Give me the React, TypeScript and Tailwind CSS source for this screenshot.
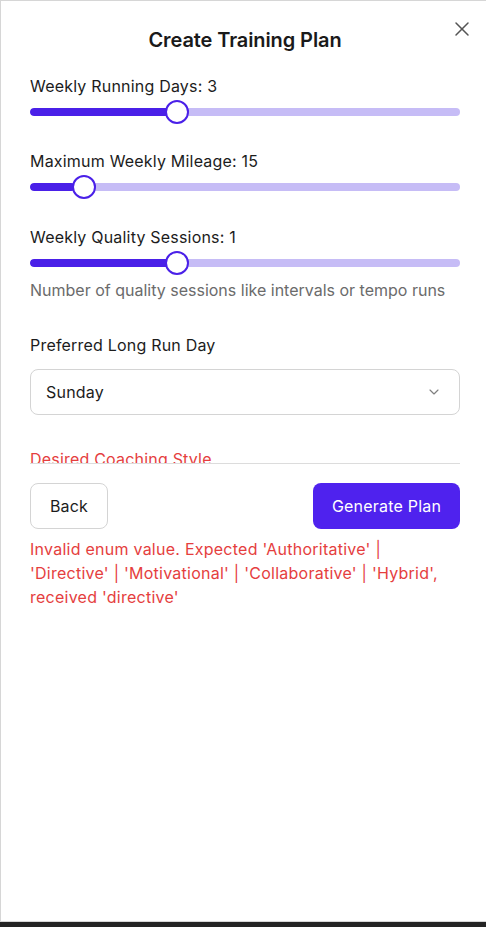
import React from "react";

function Slider({ pct }: { pct: number }) {
  return (
    <div className="relative h-[24px] flex items-center">
      <div className="w-full h-[8px] rounded-full bg-[#c6bcf6] overflow-hidden">
        <div className="h-full bg-[#4a20e8] rounded-full" style={{ width: `${pct}%` }} />
      </div>
      <div
        className="absolute top-0 w-[24px] h-[24px] rounded-full bg-white border-[2.5px] border-[#4a20e8]"
        style={{ left: `calc(${pct / 100} * (100% - 24px))` }}
      />
    </div>
  );
}

export default function App() {
  return (
    <div className="w-[486px] h-[927px] flex flex-col bg-white" style={{ fontFamily: "Inter, 'Noto Sans', sans-serif" }}>
      <div className="relative flex-1 flex flex-col border-l border-t border-b border-[#d6d6d6] pl-[29px] pr-[26px] pt-[25px] text-[16px] leading-[24px] tracking-[0.2px] text-[#1c1c1c]">
        <button className="absolute left-[449px] top-[16px] w-[24px] h-[24px] flex items-center justify-center text-[#555]">
          <svg width="24" height="24" viewBox="0 0 24 24" fill="none" stroke="currentColor" strokeWidth="1.5" strokeLinecap="round">
            <path d="M18 6 6 18" />
            <path d="m6 6 12 12" />
          </svg>
        </button>
        <h2 className="text-center text-[20px] leading-[28px] font-semibold tracking-[-0.1px] text-[#1a1a1a]">Create Training Plan</h2>
        <div className="h-[409px] shrink-0 overflow-hidden pt-[20px]">
          <div className="flex flex-col gap-[2px]">
            <div>Weekly Running Days: 3</div>
            <Slider pct={33.33} />
          </div>
          <div className="flex flex-col gap-[2px] mt-[25px]">
            <div>Maximum Weekly Mileage: 15</div>
            <Slider pct={10.4} />
          </div>
          <div className="flex flex-col gap-[2px] mt-[26px]">
            <div>Weekly Quality Sessions: 1</div>
            <Slider pct={33.33} />
          </div>
          <div className="mt-[3px] text-[#6b6b6b] tracking-normal">Number of quality sessions like intervals or tempo runs</div>
          <div className="mt-[31px]">Preferred Long Run Day</div>
          <div className="mt-[12px] h-[46px] rounded-[8px] border border-[#d4d4d4] flex items-center justify-between pl-[15px] pr-[17px]">
            <span>Sunday</span>
            <svg width="16" height="16" viewBox="0 0 24 24" fill="none" stroke="#808080" strokeWidth="1.75" strokeLinecap="round" strokeLinejoin="round">
              <path d="m6 9 6 6 6-6" />
            </svg>
          </div>
          <div className="mt-[32px] text-[#e53e3e]">Desired Coaching Style</div>
        </div>
        <div className="border-t border-[#dcdcdc] pt-[19px]">
          <div className="flex justify-between">
            <button className="h-[46px] w-[78px] rounded-[8px] border border-[#d4d4d4] bg-white text-[#1c1c1c]">Back</button>
            <button className="h-[46px] w-[147px] rounded-[8px] bg-[#4f22ee] text-white">Generate Plan</button>
          </div>
          <p className="mt-[8px] text-[#e53e3e] tracking-[0.25px]">
            Invalid enum value. Expected 'Authoritative' | 'Directive' | 'Motivational' | 'Collaborative' | 'Hybrid', received 'directive'
          </p>
        </div>
      </div>
      <div className="h-[5px] bg-[#242424]" />
    </div>
  );
}
